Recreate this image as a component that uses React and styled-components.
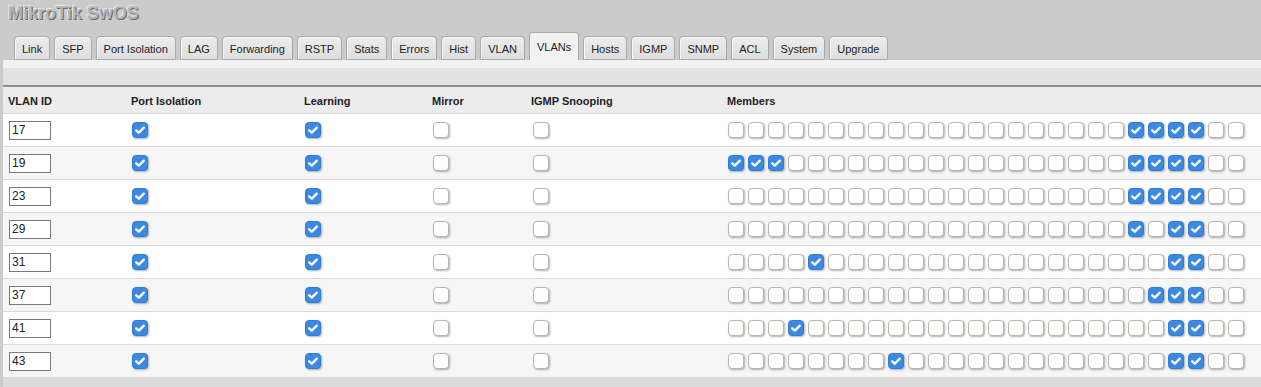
import React from "react";
import styled, { createGlobalStyle } from "styled-components";

const GlobalStyle = createGlobalStyle`
  html, body { margin: 0; padding: 0; }
  body {
    background: #cbcbcb;
    font-family: "Liberation Sans", Arial, sans-serif;
    font-size: 11px;
    color: #222;
  }
`;

const Page = styled.div`
  width: 1261px;
  height: 387px;
  overflow: hidden;
  display: flex;
  flex-direction: column;
`;

const Title = styled.h1`
  margin: 0;
  padding: 3px 0 0 8px;
  height: 31px;
  box-sizing: border-box;
  font-family: "Liberation Sans", Arial, sans-serif;
  font-size: 18px;
  font-weight: bold;
  color: #b4b4b4;
  text-shadow: 1px 1px 0 #6a6a6a, -1px -1px 0 #e8e8e8;
  letter-spacing: 0;
`;

const TabBar = styled.div`
  display: flex;
  align-items: flex-end;
  gap: 4px;
  padding-left: 14px;
  height: 29px;
`;

const Tab = styled.div`
  box-sizing: border-box;
  height: ${(p) => (p.$active ? 28 : 24)}px;
  padding: 0 7px;
  display: flex;
  align-items: center;
  padding-top: ${(p) => (p.$active ? 0 : 1)}px;
  border: 1px solid #a9a9a9;
  border-bottom: ${(p) => (p.$active ? "none" : "1px solid #a9a9a9")};
  border-radius: 4px 4px 0 0;
  background: ${(p) =>
    p.$active ? "#f2f2f2" : "linear-gradient(#ececec, #dedede)"};
  box-shadow: inset 1px 1px 0 #f8f8f8;
  color: #222;
  font-size: 11px;
  white-space: nowrap;
`;

const Panel = styled.div`
  margin-left: 3px;
  flex: 1;
  background: #dcdcdc;
  display: flex;
  flex-direction: column;
`;

const Strip = styled.div`
  height: 8px;
  background: #f2f2f2;
`;

const Toolbar = styled.div`
  height: 17px;
  background: #e2e2e2;
  border-bottom: 2px solid #8e8e8e;
`;

const Row = styled.div`
  display: grid;
  grid-template-columns: 123px 173px 128px 99px 196px 1fr;
  align-items: center;
  box-sizing: border-box;
  height: ${(p) => (p.$head ? 27 : 33)}px;
  background: ${(p) => (p.$head ? "#ececec" : p.$alt ? "#f6f6f6" : "#ffffff")};
  border-bottom: 1px solid #d9d9d9;
`;

const HeadCell = styled.div`
  padding-left: 5px;
  font-weight: bold;
  font-size: 11px;
  color: #222;
  padding-top: 1px;
`;

const Cell = styled.div`
  padding-left: ${(p) => p.$pad ?? 6}px;
  display: flex;
  align-items: center;
  gap: 4px;
`;

const IdInput = styled.input`
  box-sizing: border-box;
  width: 42px;
  height: 19px;
  margin: 0 0 0 1px;
  padding: 0 2px;
  border: 1px solid #7a7a7a;
  background: #fff;
  font-family: "Liberation Sans", Arial, sans-serif;
  font-size: 12px;
  color: #222;
  outline: none;
`;

const Box = styled.span`
  box-sizing: border-box;
  width: 16px;
  height: 16px;
  flex: none;
  border-radius: 4px;
  display: inline-flex;
  align-items: center;
  justify-content: center;
  border: 1px solid ${(p) => (p.$on ? "#2f7bd8" : "#bbb5ae")};
  background: ${(p) => (p.$on ? "#3c89e4" : "#ffffff")};
  box-shadow: 1px 1px 2px rgba(0, 0, 0, 0.3);
`;

const Check = ({ on }) => (
  <Box $on={on}>
    {on && (
      <svg width="12" height="12" viewBox="0 0 12 12">
        <path
          d="M2.2 6.3 L4.8 8.6 L9.8 3.6"
          fill="none"
          stroke="#fff"
          strokeWidth="2.3"
          strokeLinecap="round"
          strokeLinejoin="round"
        />
      </svg>
    )}
  </Box>
);

const tabs = [
  "Link", "SFP", "Port Isolation", "LAG", "Forwarding", "RSTP", "Stats",
  "Errors", "Hist", "VLAN", "VLANs", "Hosts", "IGMP", "SNMP", "ACL",
  "System", "Upgrade",
];

const vlans = [
  { id: "17", members: [20, 21, 22, 23] },
  { id: "19", members: [0, 1, 2, 20, 21, 22, 23] },
  { id: "23", members: [20, 21, 22, 23] },
  { id: "29", members: [20, 22, 23] },
  { id: "31", members: [4, 22, 23] },
  { id: "37", members: [21, 22, 23] },
  { id: "41", members: [3, 22, 23] },
  { id: "43", members: [8, 22, 23] },
];

const PORTS = 26;

export default function App() {
  return (
    <>
      <GlobalStyle />
      <Page>
        <Title>MikroTik SwOS</Title>
        <TabBar>
          {tabs.map((t) => (
            <Tab key={t} $active={t === "VLANs"}>
              {t}
            </Tab>
          ))}
        </TabBar>
        <Panel>
          <Strip />
          <Toolbar />
          <Row $head>
            <HeadCell>VLAN ID</HeadCell>
            <HeadCell>Port Isolation</HeadCell>
            <HeadCell>Learning</HeadCell>
            <HeadCell>Mirror</HeadCell>
            <HeadCell>IGMP Snooping</HeadCell>
            <HeadCell>Members</HeadCell>
          </Row>
          {vlans.map((v, i) => (
            <Row key={v.id} $alt={i % 2 === 1}>
              <Cell $pad={5}>
                <IdInput defaultValue={v.id} />
              </Cell>
              <Cell>
                <Check on />
              </Cell>
              <Cell>
                <Check on />
              </Cell>
              <Cell>
                <Check on={false} />
              </Cell>
              <Cell $pad={7}>
                <Check on={false} />
              </Cell>
              <Cell>
                {Array.from({ length: PORTS }, (_, p) => (
                  <Check key={p} on={v.members.includes(p)} />
                ))}
              </Cell>
            </Row>
          ))}
        </Panel>
      </Page>
    </>
  );
}
